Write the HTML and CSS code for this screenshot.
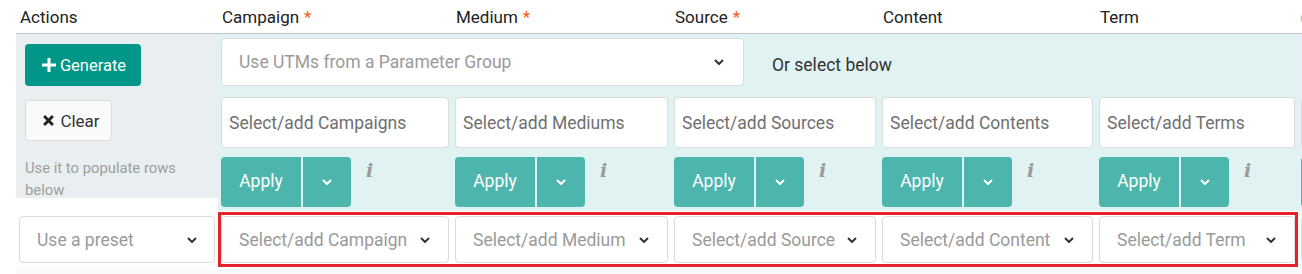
FILE: index.html
```html
<!DOCTYPE html>
<html>
  <head>
    <meta charset="utf-8">
    <link rel="stylesheet" href="styles.css">
  </head>
  <body>
    <div class="sheet">
      <div class="row head">
        <div class="cell">Actions</div>
        <div class="cell">Campaign <span class="req">*</span></div>
        <div class="cell">Medium <span class="req">*</span></div>
        <div class="cell">Source <span class="req">*</span></div>
        <div class="cell">Content</div>
        <div class="cell">Term</div>
        <div class="cell faint">custom</div>
      </div>

      <div class="panel">
        <div class="row r-group">
          <div class="cell act"><button class="btn gen"><svg class="plus" viewBox="0 0 14 14"><path d="M7 0v14M0 7h14"/></svg>Generate</button></div>
          <div class="cell span">
            <div class="select wide"><span>Use UTMs from a Parameter Group</span><svg class="chev" viewBox="0 0 10 6"><polyline points="1,1 5,5 9,1"/></svg></div>
            <span class="or">Or select below</span>
          </div>
          <div class="cell extra"></div>
        </div>

        <div class="row r-multi">
          <div class="cell act"><button class="btn clear"><svg class="x" viewBox="0 0 10 10"><path d="M1 1l8 8M9 1l-8 8"/></svg>Clear</button></div>
          <div class="cell"><div class="tags">Select/add Campaigns</div></div>
          <div class="cell"><div class="tags">Select/add Mediums</div></div>
          <div class="cell"><div class="tags">Select/add Sources</div></div>
          <div class="cell"><div class="tags">Select/add Contents</div></div>
          <div class="cell"><div class="tags">Select/add Terms</div></div>
          <div class="cell extra"><div class="tags"></div></div>
        </div>

        <div class="row r-apply">
          <div class="cell act note">Use it to populate rows below</div>
          <div class="cell"><div class="apply"><button class="ap">Apply</button><button class="dd"><svg class="chev" viewBox="0 0 10 6"><polyline points="1,1 5,5 9,1"/></svg></button></div><i class="info">i</i></div>
          <div class="cell"><div class="apply"><button class="ap">Apply</button><button class="dd"><svg class="chev" viewBox="0 0 10 6"><polyline points="1,1 5,5 9,1"/></svg></button></div><i class="info">i</i></div>
          <div class="cell"><div class="apply"><button class="ap">Apply</button><button class="dd"><svg class="chev" viewBox="0 0 10 6"><polyline points="1,1 5,5 9,1"/></svg></button></div><i class="info">i</i></div>
          <div class="cell"><div class="apply"><button class="ap">Apply</button><button class="dd"><svg class="chev" viewBox="0 0 10 6"><polyline points="1,1 5,5 9,1"/></svg></button></div><i class="info">i</i></div>
          <div class="cell"><div class="apply"><button class="ap">Apply</button><button class="dd"><svg class="chev" viewBox="0 0 10 6"><polyline points="1,1 5,5 9,1"/></svg></button></div><i class="info">i</i></div>
          <div class="cell extra"><div class="apply"><button class="ap"></button></div></div>
        </div>
      </div>

      <div class="row r-preset">
        <div class="cell act"><div class="select preset"><span>Use a preset</span><svg class="chev" viewBox="0 0 10 6"><polyline points="1,1 5,5 9,1"/></svg></div></div>
        <div class="picker">
          <div class="pcell"><div class="select"><span>Select/add Campaign</span><svg class="chev" viewBox="0 0 10 6"><polyline points="1,1 5,5 9,1"/></svg></div></div>
          <div class="pcell"><div class="select"><span>Select/add Medium</span><svg class="chev" viewBox="0 0 10 6"><polyline points="1,1 5,5 9,1"/></svg></div></div>
          <div class="pcell"><div class="select"><span>Select/add Source</span><svg class="chev" viewBox="0 0 10 6"><polyline points="1,1 5,5 9,1"/></svg></div></div>
          <div class="pcell"><div class="select"><span>Select/add Content</span><svg class="chev" viewBox="0 0 10 6"><polyline points="1,1 5,5 9,1"/></svg></div></div>
          <div class="pcell"><div class="select"><span>Select/add Term</span><svg class="chev" viewBox="0 0 10 6"><polyline points="1,1 5,5 9,1"/></svg></div></div>
        </div>
        <div class="cell extra"><div class="select"></div></div>
      </div>
      <div class="next-row"></div>
    </div>
  </body>
</html>
```

FILE: styles.css
```css
html, body {margin: 0; overflow: hidden; background: #fff}
body {font-family: Roboto, "Noto Sans", sans-serif; color: #333}

.sheet {padding-left: 16px; width: 1500px}

.row {display: grid; grid-template-columns: 202px 234px 219px 208px 217px 202px 200px}

/* header */
.head {height: 33px; border-bottom: 1px solid #c4c4c4; font-size: 17px; font-weight: 400; color: #222}
.head .cell {display: flex; align-items: center; padding-left: 4px}
.head .req {color: #ff5722; margin-left: 5px}
.head .faint {color: #bbb; padding-left: 2px}

/* the light panel with bulk tools */
.panel .cell {background: #e0f2f1; padding: 0 3px}
.panel .cell.act {background: #e9eef0; padding: 0 3px 0 9px}
.panel .cell.extra {background: #e5f1f8}

.r-group .cell {padding-top: 4px !important; height: 48px}
.r-group .span {grid-column: 2 / 7; display: flex; align-items: center}
.r-multi .cell {padding-top: 11px !important; height: 51px}
.r-apply .cell {padding-top: 9px !important; padding-bottom: 4px !important; height: 50px; display: flex; align-items: flex-start}

.btn {font-family: inherit; border-radius: 4px; cursor: pointer; display: flex; align-items: center; justify-content: center}
.gen {margin-top: 6px; width: 116px; height: 42px; background: #009688; color: #fff; border: 0; font-size: 16.5px; padding: 0 0 0 2px}
.gen .plus {width: 14px; height: 14px; stroke: #fff; stroke-width: 3; margin-right: 4px}
.clear {margin-top: 3px; width: 87px; height: 41px; background: #fafafa; border: 1px solid #dcdcdc; color: #333; font-size: 17px; padding: 0 0 0 6px}
.clear .x {width: 11px; height: 11px; stroke: #222; stroke-width: 2.6; margin-right: 6px}

.select {box-sizing: border-box; display: flex; align-items: center; justify-content: space-between; background: #fff; border: 1px solid #dcdcdc; border-radius: 4px; height: 47px; padding: 0 17px 0 17px; font-size: 17.5px; color: #9a9a9a}
.select.wide {width: 523px; height: 48px; padding-right: 19px}
.or {margin-left: 28px; margin-top: 5px; font-size: 17.5px; color: #333}

.chev {width: 10px; height: 6px; fill: none; stroke: #333; stroke-width: 2}

.tags {box-sizing: border-box; height: 51px; background: #fff; border: 1px solid #dcdcdc; border-radius: 4px; padding: 0 7px; display: flex; align-items: center; font-size: 17.5px; color: #707070}

.note {font-size: 14.8px; line-height: 22px; color: #9e9e9e; padding-top: 4px !important; box-sizing: border-box; padding-right: 26px !important}

.apply {display: flex; height: 50px}
.apply button {border: 0; background: #4db6ac; color: #fff; font-family: inherit; height: 50px; padding: 0}
.apply .ap {width: 80px; font-size: 17.5px; border-radius: 4px 0 0 4px; padding-bottom: 2px}
.apply .dd {width: 48px; margin-left: 2px; border-radius: 0 4px 4px 0; display: flex; align-items: center; justify-content: center}
.apply .dd .chev {stroke: #fff}
.extra .apply .ap {border-radius: 4px}
.info {font-family: "DejaVu Serif", "Liberation Serif", serif; font-weight: 700; font-style: italic; font-size: 19px; color: #9a9a9a; margin-left: 15px; margin-top: 2px; line-height: 22px}

/* preset row with the red highlight */
.r-preset {padding-top: 1px; background: #fff}
.r-preset .act {padding: 4px 3px 0 3px}
.r-preset .preset {width: 196px; padding-right: 17px}
.picker {grid-column: 2 / 7; display: grid; grid-template-columns: 231px 219px 208px 217px 199px; border: 3px solid #e3222a; padding: 1px 0}
.pcell {padding: 0 3px}
.pcell:first-child {padding-left: 0}
.pcell:last-child {padding-right: 0}
.pcell .select {padding-left: 17px; padding-right: 18px}
.r-preset .extra {padding: 4px 0 0 3px}

.next-row {height: 10px; background: #f8f9f9; margin-top: 2px}
```
